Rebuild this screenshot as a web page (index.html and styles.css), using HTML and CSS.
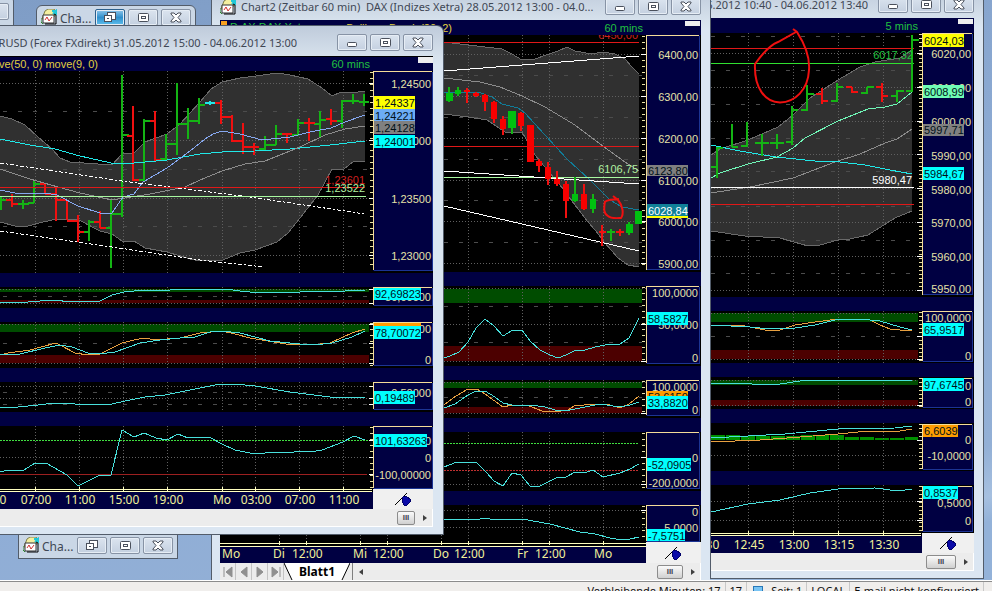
FILE: index.html
```html
<!DOCTYPE html>
<html lang="de">
<head>
<meta charset="utf-8">
<title>Charts</title>
<link rel="stylesheet" href="styles.css">
</head>
<body>
<svg class="defs" aria-hidden="true">
  <symbol id="i-chart" viewBox="0 0 16 16">
    <path d="M1 10 4 2l3-2h6l2 3-2 5z" fill="#f4efa0" stroke="#7d7d4a"/>
    <path d="M11 2h4M12 5l3-3v4" stroke="#20c8d8" stroke-width="2" fill="none"/>
    <path d="M2 6h11v8H2z" fill="#fff" stroke="#333"/>
    <path d="M13 5l2 1v9H4" fill="none" stroke="#000"/>
    <path d="M4 11l2-3 2 4 3-4" stroke="#d03030" fill="none"/>
    <path d="M0 9v4l2 2" stroke="#2a8a2a" fill="none"/>
  </symbol>
  <symbol id="i-min" viewBox="0 0 30 17"><rect x="10.500" y="8.500" width="9" height="4" rx="1" fill="#fff" stroke="#4a505c"/></symbol>
  <symbol id="i-max" viewBox="0 0 30 17"><rect x="10.500" y="4.500" width="10" height="8" rx="1" fill="#fff" stroke="#4a505c"/><rect x="13.500" y="7.500" width="4" height="2" fill="#fff" stroke="#4a505c"/></symbol>
  <symbol id="i-rest" viewBox="0 0 30 17"><rect x="12.500" y="3.500" width="8" height="7" fill="#fff" stroke="#4a505c"/><rect x="9.500" y="6.500" width="7" height="6" fill="#fff" stroke="#4a505c"/><rect x="12" y="9" width="2" height="1" fill="#4a505c"/></symbol>
  <symbol id="i-close" viewBox="0 0 30 17"><path d="M10 4h3l2 2 2-2h3v1l-3 3.500 3 3.500v1h-3l-2-2-2 2h-3v-1l3-3.500-3-3.500z" fill="#fff" stroke="#4a505c"/></symbol>
  <symbol id="i-pin" viewBox="0 0 18 14"><path d="M1 13 13 1" stroke="#000" fill="none"/><path d="M9 5l3-1 4 3v3l-3 3h-3L8 9z" fill="#0a0aa8" stroke="#00006a"/></symbol>
</svg>

<main class="desktop">
  <section class="mini mini-edge"><button class="cap" aria-label="Schließen"></button></section>
  <section class="mini mini-top">
    <svg class="ico"><use href="#i-chart"/></svg><span class="name">Cha...</span>
    <button class="cap hot" aria-label="Wiederherstellen"><svg><use href="#i-rest"/></svg></button>
    <button class="cap" aria-label="Maximieren"><svg><use href="#i-max"/></svg></button>
    <button class="cap" aria-label="Schließen"><svg><use href="#i-close"/></svg></button>
  </section>
  <section class="mini mini-bottom">
    <svg class="ico"><use href="#i-chart"/></svg><span class="name">Cha...</span>
    <button class="cap" aria-label="Wiederherstellen"><svg><use href="#i-rest"/></svg></button>
    <button class="cap" aria-label="Maximieren"><svg><use href="#i-max"/></svg></button>
    <button class="cap" aria-label="Schließen"><svg><use href="#i-close"/></svg></button>
  </section>

  <!-- DAX, 60 min -->
  <section class="win win-dax">
    <header class="bar">
      <svg class="ico"><use href="#i-chart"/></svg>
      <h2 class="name">Chart2 (Zeitbar 60 min)&nbsp; DAX (Indizes Xetra) 28.05.2012 13:00 - 04.0...</h2>
      <button class="cap" aria-label="Minimieren"><svg><use href="#i-min"/></svg></button>
      <button class="cap" aria-label="Maximieren"><svg><use href="#i-max"/></svg></button>
      <button class="cap" aria-label="Schließen"><svg><use href="#i-close"/></svg></button>
    </header>
    <svg class="chart" viewBox="220 20 481 543">
      <path class="plot" d="M220 35H701V272H220zM220 286H701V366H220zM220 380H701V418H220zM220 432H701V491H220zM220 505H701V545H220z"/>
      <path class="band" d="M444 42 460 44 502 49 512 54 522 60 535 59 549 54 558 51 567 47 575 51 592 54 603 52 615 54 625 59 632 67 639 74V267L628 265 618 258 605 243 595 230 588 222 575 205 560 185 549 172 535 155 522 132H505L487 120 468 117 444 114z"/>
      <path class="green" d="M220 289H642V303H220zM220 382H642V388H220z"/>
      <path class="red" d="M220 346H642V361H220zM220 407H642V413H220z"/>
      <path class="dot" d="M468.500 35V272M522.500 35V272M549.500 35V272M603.500 35V272M468.500 286V366M522.500 286V366M549.500 286V366M603.500 286V366M468.500 380V418M522.500 380V418M549.500 380V418M603.500 380V418M468.500 432V491M522.500 432V491M549.500 432V491M603.500 432V491M279.500 505V543M306.500 505V543M360.500 505V543M387.500 505V543M441.500 505V543M468.500 505V543M522.500 505V543M549.500 505V543M603.500 505V543"/>
      <path class="dot" d="M444 54.500H646M444 96.500H646M444 138.500H646M444 180.500H646M444 221.500H646M444 263.500H646M444 288.500H646M444 324.500H646M444 361.500H646M444 382.500H646M444 413.500H646M444 457.500H646M444 484.500H646M444 510.500H646M444 527.500H646"/>
      <path class="dash" d="M444 75.500H642M444 117.500H642M444 159.500H642M444 200.500H642M444 242.500H642M444 306.500H642M444 342.500H642M444 397.500H642"/>
      <path class="tick" d="M643.500 36V269M643.500 287V364M643.500 381V416M643.500 433V489M643.500 506V542"/>
      <path class="major" d="M641 54.500H646M641 96.500H646M641 138.500H646M641 180.500H646M641 221.500H646M641 263.500H646M641 324.500H646M641 361.500H646M641 413.500H646M641 457.500H646M641 484.500H646M641 510.500H646"/>
      <path class="ln edge" d="M444 42 460 44 502 49 512 54 522 60 535 59 549 54 558 51 567 47 575 51 592 54 603 52 615 54 625 59 632 67 639 74M639 267 628 265 618 258 605 243 595 230 588 222 575 205 560 185 549 172 535 155 522 132H505L487 120 468 117 444 114"/>
      <path class="ln gray" d="M444 78 480 82 500 87 522 96 545 107 575 125 600 144 625 162 639 171"/>
      <path class="ln teal" d="M444 92H478L492 97 502 104 518 108 525 113 545 135 567 159 590 180 610 200 622 207 639 210"/>
      <path class="ln r" d="M444 42.500H639M444 146.500H639"/>
      <path class="ln lime" d="M444 177.500H639"/>
      <path class="ln w" d="M444 71 639 56M444 171 639 184M444 206 639 251"/>
      <path class="ohlc r" d="M467 88V103M476 92V97M485 94V111M494 101V123M503 116V135M521 112V131M539 159V172M548 162V185M557 171V186M566 181V218M584 184V210M602 225V246M599 232H606M620 229V236M616 232H624"/>
      <path class="ohlc g" d="M449 87V102M458 87V96M512 111V134M575 177V202M593 194V213M611 229V241M607 232H615M629 222V235"/>
      <path class="fr" d="M464 90h6v2h-6zM473 93h6v3h-6zM482 95h6v7h-6zM491 102h6v17h-6zM500 119h6v10h-6zM518 113h6v13h-6zM527 125h7v37h-7zM536 161h6v5h-6zM545 167h6v12h-6zM554 179h6v5h-6zM563 184h6v17h-6zM581 194h6v15h-6z"/>
      <path class="fg" d="M446 93h7v8h-7zM455 90h6v4h-6zM508 111h8v17h-8zM572 194h6v7h-6zM590 199h6v10h-6zM626 224h7v9h-7zM635 211h7v13h-7z"/>
      <path class="pen" d="M605 201C604 208 603 213 608 216 611 219 618 218 621 218 624 214 623 206 618 200L613 196M605 202C608 199 613 200 619 199"/>
      <text class="n r" x="638" y="39">6450,00</text>
      <text class="n lime" x="638" y="173">6106,75</text>
      <path class="ln c" d="M444 358 450 356 459 352 468 342 476 328 485 319 494 326 503 336 513 330H522L530 341 540 350 550 355 558 358 566 355 576 350H585L595 347 605 345 620 344 629 338 639 318"/>
      <path class="ln o" d="M444 405 456 396 468 389H477L485 394 503 407 512 405H527L542 411 555 412 568 410 574 406 595 404 610 405 620 408 629 404 639 396"/>
      <path class="ln c" d="M444 408 455 404 468 395 476 391H485L495 397 503 403 512 405H530L545 407 555 410H570L590 406 600 404 620 407 630 405 639 402"/>
      <path class="gdot" d="M444 443.500H639"/><path class="rdot" d="M444 470.500H639"/>
      <path class="ln c" d="M444 467 457 462 468 463 476 462 486 472 494 481 503 486 512 473 521 475 530 486H540L558 477H566L575 472H587L593 470 603 477 620 473 630 469 639 464"/>
      <path class="ln c" d="M220 519H480L485 518 490 519H522L550 524 580 532 595 534 610 538 622 540 630 539 639 537"/>
      <rect class="navy" x="220" y="20" width="481" height="15"/>
      <rect x="221" y="21" width="6" height="9" fill="#f8a020"/>
      <text class="t g" x="230" y="31">D.AX.DAX Xetra</text>
      <text class="t y" x="452" y="32" text-anchor="end">BollingerBands(20, 2)</text>
      <text class="t g" x="643" y="32" text-anchor="end">60 mins</text>
      <rect x="685" y="21" width="15" height="5" fill="#eee"/>
      <path class="navy" d="M646 35H700V270H646zM646 286H700V364H646zM646 380H700V416H646zM646 432H700V489H646zM646 505H700V542H646z"/>
      <path class="ax" d="M699 35.500H646.500V270M699 286.500H646.500V363M699 380.500H646.500V415M699 432.500H646.500V488M699 505.500H646.500V541"/>
      <path class="axb" d="M699.500 36V269.500H647M699.500 287V363.500H647M699.500 381V415.500H647M699.500 433V488.500H647M699.500 506V541.500H647"/>
      <g class="n">
        <text x="698" y="59">6400,00</text><text x="698" y="101">6300,00</text><text x="698" y="143">6200,00</text><text x="698" y="185">6100,00</text><text x="698" y="226">6000,00</text><text x="698" y="268">5900,00</text>
        <text x="698" y="297">100,0000</text><text x="698" y="329">50,0000</text><text x="698" y="362">0</text>
        <text x="698" y="391">100,0000</text><text x="698" y="414">0</text><text x="698" y="462">0</text><text x="698" y="487">-200,0000</text>
        <text x="698" y="516">0</text><text x="698" y="532">-5,0000</text>
      </g>
      <path fill="#808080" d="M647 165h41v11h-41z"/><path fill="#108098" d="M647 204h41v12h-41z"/><path fill="#ff0" d="M647 216h41v2h-41z"/>
      <path fill="#ff9c00" d="M647 391h41v6h-41z"/>
      <text class="tag" x="648" y="401">53,6150</text>
      <path fill="#0ff" d="M647 312h41v13h-41zM647 396h41v13h-41zM647 458h44v13h-44zM647 529h38v12h-38z"/>
      <g class="tag"><text x="648" y="175">6123,80</text><text class="w" x="648" y="215">6028,84</text><text x="648" y="323">58,5827</text><text x="648" y="407">33,8820</text><text x="648" y="469">-52,0905</text><text x="648" y="540">-7,5751</text></g>
      <path fill="#000" d="M220 543H646V547H220z"/>
      <path class="base" d="M220 543.500H646M220 546.500H646M279.500 541V545M306.500 541V545M360.500 541V545M387.500 541V545M441.500 541V545M468.500 541V545M522.500 541V545M549.500 541V545M603.500 541V545"/>
      <rect class="face" x="646" y="542" width="56" height="21"/>
      <use href="#i-pin" x="664" y="546" width="18" height="14"/>
      <g class="time"><text x="222" y="558">Mo</text><text x="273" y="558">Di</text><text x="292" y="558">12:00</text><text x="353" y="558">Mi</text><text x="373" y="558">12:00</text><text x="433" y="558">Do</text><text x="454" y="558">12:00</text><text x="517" y="558">Fr</text><text x="535" y="558">12:00</text><text x="594" y="558">Mo</text></g>
    </svg>
    <footer class="sheets">
      <button aria-label="Erstes Blatt"><svg viewBox="0 0 16 16"><path d="M4 3v10M12 3v10L6 8z"/></svg></button>
      <button aria-label="Voriges Blatt"><svg viewBox="0 0 16 16"><path d="M11 3v10L5 8z"/></svg></button>
      <button aria-label="Nächstes Blatt"><svg viewBox="0 0 16 16"><path d="M5 3v10l6-5z"/></svg></button>
      <button aria-label="Letztes Blatt"><svg viewBox="0 0 16 16"><path d="M12 3v10M4 3v10l6-5z"/></svg></button>
      <div class="tab">
        <svg viewBox="0 0 66 17"><path d="M0 0 8 17H58L66 0z" fill="#fff" stroke="none"/><path d="M0 0 8 17M66 0 58 17" stroke="#000" fill="none"/></svg>
        <button>Blatt1</button>
      </div>
      <div class="scroll"><span class="arrow left"></span><button class="thumb" aria-label="Bildlauf">III</button><span class="arrow"></span></div>
    </footer>
  </section>

  <!-- 5 min -->
  <section class="win win-five">
    <header class="bar">
      <h2 class="name end">04.06.2012 10:40 - 04.06.2012 13:40</h2>
      <button class="cap" aria-label="Minimieren"><svg><use href="#i-min"/></svg></button>
      <button class="cap" aria-label="Maximieren"><svg><use href="#i-max"/></svg></button>
      <button class="cap" aria-label="Schließen"><svg><use href="#i-close"/></svg></button>
    </header>
    <svg class="chart" viewBox="711 18 263 535">
      <path class="plot" d="M711 33H974V297H711zM711 311H974V363H711zM711 377H974V409H711zM711 423H974V471H711zM711 485H974V536H711z"/>
      <path class="band" d="M711 155 720 149 748 140 778 127 793 115 810 98 838 80 860 67 875 62 900 58 912 50V211L895 218 868 235 850 239 838 240 820 245 808 246 780 238 745 236 711 231z"/>
      <path class="green" d="M711 313H918V322H711zM711 380H918V385H711z"/>
      <path class="red" d="M711 350H918V359H711zM711 400H918V406H711z"/>
      <path class="bars" d="M711 435h14v5h-14zM726 435h14v5h-14zM741 436h14v4h-14zM756 436h14v4h-14zM771 436h14v4h-14zM786 436h14v4h-14zM801 435h14v5h-14zM816 435h13v5h-13zM830 435h14v5h-14zM845 437h14v3h-14zM860 437h14v3h-14zM875 438h14v2h-14zM890 438h14v2h-14zM905 437h13v3h-13z"/>
      <path class="dot" d="M748.500 33V297M793.500 33V297M838.500 33V297M883.500 33V297M748.500 311V363M793.500 311V363M838.500 311V363M883.500 311V363M748.500 377V409M793.500 377V409M838.500 377V409M883.500 377V409M748.500 423V471M793.500 423V471M838.500 423V471M883.500 423V471M748.500 485V533M793.500 485V533M838.500 485V533M883.500 485V533"/>
      <path class="dot" d="M711 53.500H922M711 87.500H922M711 121.500H922M711 154.500H922M711 188.500H922M711 222.500H922M711 256.500H922M711 290.500H922M711 313.500H918M711 359.500H918M711 380.500H918M711 405.500H918M711 455.500H918M711 501.500H918M711 520.500H918"/>
      <path class="dash" d="M711 36.500H920M711 70.500H920M711 104.500H920M711 138.500H920M711 171.500H920M711 206.500H920M711 240.500H920M711 273.500H920M711 336.500H918"/>
      <path class="tick fine" d="M920.500 34V294M920.500 312V361M920.500 378V407M920.500 424V469M920.500 486V531"/>
      <path class="major" d="M917 53.500H922M917 87.500H922M917 121.500H922M917 154.500H922M917 188.500H922M917 222.500H922M917 256.500H922M917 290.500H922M917 336.500H922M917 359.500H922M917 405.500H922M917 440.500H922M917 501.500H922M917 520.500H922"/>
      <path class="ln edge" d="M711 155 720 149 748 140 778 127 793 115 810 98 838 80 860 67 875 62 900 58 912 50M912 211 895 218 868 235 850 239 838 240 820 245 808 246 780 238 745 236 711 231"/>
      <path class="ln gray" d="M711 193 750 187 793 178 835 162 860 154 885 143 897 139 912 129"/>
      <path class="ln r" d="M711 48.500H914M711 204.500H914"/>
      <path class="ln g" d="M711 63.500H914"/><path class="ln w" d="M711 187.500H914"/>
      <path class="ln cy" d="M711 145 740 151 776 157 815 161 840 162 865 165 890 170 912 174"/>
      <path class="ln mint" d="M711 178 720 173 748 164 777 157 793 148 805 138 838 121 868 109 885 107 897 104 912 92"/>
      <path class="ohlc g" d="M717 147V178M711 167H717M717 148H723M732 124V147M732 147H738M747 122V147M741 146H747M762 134V156M755 143H769M777 134V149M770 143H784M792 106V145M786 142H792M792 110H798M807 85V111M801 110H807M807 94H814M837 83V102M831 101H837M837 87H843M867 87V94M861 93H867M867 87H874M897 90V102M891 96H897M897 91H904M912 35V92M906 91H912M912 40H919"/>
      <path class="ohlc r" d="M822 88V104M816 94H822M822 101H828M852 87V93M846 87H852M852 92H858M882 83V102M876 87H882M882 96H888"/>
      <path class="pen" d="M793 29 797 32C806 46 810 58 809 70 808 90 795 102 780 102.500 765 102 754 88 755 64 760 57 770 45 778 42L796 32"/>
      <text class="n g" x="913" y="59">6017,32</text><text class="n w" x="912" y="184">5980,47</text>
      <path class="ln o" d="M711 325 745 326 765 330H780L795 325 815 322 838 319H868L880 325 890 329 900 330H912"/>
      <path class="ln c" d="M711 325 750 327 770 329 795 328 815 325 835 320 860 319 880 321 900 327 912 330"/>
      <path class="ln c" d="M711 383H740L752 384H780L800 381 838 380.500 912 381"/>
      <path class="ln o" d="M711 442 760 440 800 437 838 434 868 431H900L912 429"/>
      <path class="ln c" d="M711 438 748 436 785 434 838 429 895 428 912 426"/>
      <path class="ln c" d="M711 512 748 504 780 500 810 493 838 489 875 488 890 490 898 491 912 489"/>
      <text class="t g" x="918" y="30" text-anchor="end">5 mins</text>
      <rect x="958" y="19" width="15" height="5" fill="#eee"/>
      <path class="navy" d="M922 33H973V295H922zM922 311H973V362H922zM922 378H973V408H922zM922 424H973V470H922zM922 486H973V532H922z"/>
      <path class="ax" d="M972 33.500H922.500V295M972 311.500H922.500V361M972 378.500H922.500V407M972 424.500H922.500V469M972 486.500H922.500V531"/>
      <path class="axb" d="M972.500 34V294.500H923M972.500 312V361.500H923M972.500 379V407.500H923M972.500 425V469.500H923M972.500 487V531.500H923"/>
      <g class="n">
        <text x="971" y="58">6020,00</text><text x="971" y="92">6010,00</text><text x="971" y="126">6000,00</text><text x="971" y="160">5990,00</text><text x="971" y="194">5980,00</text><text x="971" y="227">5970,00</text><text x="971" y="261">5960,00</text><text x="971" y="293">5950,00</text>
        <text x="971" y="322">100,0000</text><text x="971" y="360">0</text><text x="971" y="390">0</text><text x="971" y="406">0</text><text x="971" y="444">0</text><text x="971" y="460">-10,0000</text><text x="971" y="507">0,5000</text><text x="971" y="525">0</text>
      </g>
      <path fill="#ff0" d="M923 34h41v13h-41z"/><path fill="#6ffcb4" d="M923 85h41v13h-41z"/><path fill="#808080" d="M923 124h41v12h-41z"/>
      <path fill="#0ff" d="M923 167h41v13h-41zM923 323h41v13h-41zM923 378h41v13h-41zM923 486h35v13h-35z"/><path fill="#ff9c00" d="M923 425h35v12h-35z"/>
      <g class="tag"><text x="924" y="45">6024,03</text><text x="924" y="96">6008,99</text><text x="924" y="134">5997,71</text><text x="924" y="178">5984,67</text><text x="924" y="334">65,9517</text><text x="924" y="389">97,6745</text><text x="924" y="435">6,6039</text><text x="924" y="497">0,8537</text></g>
      <path class="base" d="M711 533.500H921M711 535.500H921M748.500 531V535M793.500 531V535M838.500 531V535M883.500 531V535"/>
      <rect class="face" x="922" y="533" width="53" height="20"/>
      <use href="#i-pin" x="939" y="536" width="18" height="14"/>
      <g class="time mid"><text x="704" y="549">12:30</text><text x="749" y="549">12:45</text><text x="794" y="549">13:00</text><text x="839" y="549">13:15</text><text x="884" y="549">13:30</text></g>
    </svg>
    <div class="scroll"><button class="thumb" aria-label="Bildlauf">III</button><span class="arrow"></span></div>
  </section>

  <!-- EURUSD, 60 min -->
  <section class="win win-eur">
    <header class="bar">
      <h2 class="name end">EURUSD (Forex FXdirekt) 31.05.2012 15:00 - 04.06.2012 13:00</h2>
      <button class="cap" aria-label="Minimieren"><svg><use href="#i-min"/></svg></button>
      <button class="cap" aria-label="Maximieren"><svg><use href="#i-max"/></svg></button>
      <button class="cap" aria-label="Schließen"><svg><use href="#i-close"/></svg></button>
    </header>
    <svg class="chart" viewBox="0 56 433 453">
      <path class="plot" d="M0 71H433V273H0zM0 287H433V308H0zM0 322H433V368H0zM0 382H433V412H0zM0 426H433V492H0z"/>
      <path class="band" d="M0 116 12 119 25 125 38 137 52 149 60 158 70 162 112 165 122 154 134 153 145 142 167 134 180 124 200 102 211 89 222 82 240 78 256 76 277 73 290 75 308 79 322 88 332 96 341 92 352 93 365 91V162L354 161 344 169H332L318 195 300 218 288 233 277 242 255 250 240 253 223 260 200 261 190 259 167 252 145 248 134 241H122L112 234 100 231 77 219H56L35 224 25 227 15 226 0 222z"/>
      <path class="green" d="M0 289H369V292H0zM0 324H369V332H0z"/>
      <path class="red" d="M0 300H369V303H0zM0 355H369V363H0z"/>
      <path class="dot" d="M35.500 71V273M79.500 71V273M123.500 71V273M167.500 71V273M222.500 71V273M255.500 71V273M299.500 71V273M343.500 71V273M35.500 287V308M79.500 287V308M123.500 287V308M167.500 287V308M222.500 287V308M255.500 287V308M299.500 287V308M343.500 287V308M35.500 322V368M79.500 322V368M123.500 322V368M167.500 322V368M222.500 322V368M255.500 322V368M299.500 322V368M343.500 322V368M35.500 382V412M79.500 382V412M123.500 382V412M167.500 382V412M222.500 382V412M255.500 382V412M299.500 382V412M343.500 382V412M35.500 426V489M79.500 426V489M123.500 426V489M167.500 426V489M222.500 426V489M255.500 426V489M299.500 426V489M343.500 426V489"/>
      <path class="dot" d="M0 83.500H373M0 140.500H373M0 198.500H373M0 255.500H373M0 289.500H369M0 303.500H369M0 324.500H369M0 363.500H369M0 386.500H373M0 398.500H373M0 457.500H373"/>
      <path class="dash" d="M3 111.500H369M3 169.500H369M3 226.500H369M3 296.500H369M3 343.500H369M3 392.500H369M3 404.500H369"/>
      <path class="tick" d="M371.500 72V270M371.500 323V366M371.500 427V489"/>
      <path class="major" d="M369 83.500H373M369 140.500H373M369 198.500H373M369 255.500H373M369 289.500H373M369 303.500H373M369 324.500H373M369 343.500H373M369 363.500H373M369 386.500H373M369 398.500H373M369 404.500H373M369 440.500H373M369 457.500H373M369 474.500H373"/>
      <path class="ln edge" d="M0 116 12 119 25 125 38 137 52 149 60 158 70 162 112 165 122 154 134 153 145 142 167 134 180 124 200 102 211 89 222 82 240 78 256 76 277 73 290 75 308 79 322 88 332 96 341 92 352 93 365 91M365 162 354 161 344 169H332L318 195 300 218 288 233 277 242 255 250 240 253 223 260 200 261 190 259 167 252 145 248 134 241H122L112 234 100 231 77 219H56L35 224 25 227 15 226 0 222"/>
      <path class="ohlc g" d="M1 197V210M1 200H7M23 200V209M18 204H29M34 181V203M28 203H34M34 184H40M89 220V241M83 232H89M89 222H95M111 200V268M105 228H111M111 214H117M122 75V217M116 214H122M122 135H129M144 119V181M138 180H144M144 121H150M166 134V160M160 159H166M166 144H172M177 83V155M171 144H177M177 124H183M188 108V139M182 124H188M188 121H194M199 98V124M193 121H199M199 105H205M265 136V150M259 149H265M265 145H271M276 125V145M270 145H276M276 134H282M298 119V136M292 135H298M298 123H304M320 111V137M314 124H320M320 120H326M342 100V128M336 121H342M342 101H348M353 94V104M348 101H359M364 94V106M359 102H369"/>
      <path class="ohlc r" d="M12 194V207M6 200H12M12 204H18M45 184V194M40 184H45M45 194H51M56 187V221M50 194H56M56 200H62M67 200V220M61 200H67M67 221H73M78 215V242M72 221H78M78 232H84M100 211V228M94 222H100M100 228H106M133 106V181M127 136H133M133 180H139M155 111V161M150 121H155M155 160H161M221 100V124M215 103H221M221 117H227M232 115V142M226 117H232M232 141H238M243 123V154M237 141H243M243 147H249M254 143V155M248 147H259M287 133V143M282 134H292M309 118V141M304 123H315M331 109V125M326 119H331M331 121H337"/>
      <path class="ohlc cy" d="M205 103H215M210 101V105"/>
      <path class="ln cy" d="M0 139 30 145 55 149 80 156 111 163H134L167 160 200 154 222 152 255 151 290 149 330 145 365 141"/>
      <path class="ln gray" d="M0 169 30 179 58 187 80 193 112 200 150 194 185 187 200 180 222 171 245 164 265 161 280 155 300 147 325 135 345 129 365 126"/>
      <path class="ln blue" d="M0 190 20 194 45 193 57 195 78 206 100 213H112L123 197 134 194 143 182 167 168 190 151 205 139 213 134 222 131 240 134 262 140 290 137 310 132 331 128 345 122 365 115"/>
      <path class="trend" d="M0 163 122 181 250 197 365 214M0 231 112 247 200 260 264 267"/>
      <path class="ln r" d="M0 187.500H365"/><path class="ln lime" d="M0 196.500H366"/>
      <text class="n r" x="365" y="184">1,23601</text><text class="n lime" x="365" y="192">1,23522</text>
      <path class="ln c" d="M0 302H28L40 301 60 300 65 302 85 301H100L112 295 124 292 145 290H170L175 289H225L240 291 250 292H300L320 291H345L365 290"/>
      <path class="ln o" d="M0 355 8 353 30 350 56 343 60 345 75 353 88 355 100 354 122 343 134 340 145 338 155 340 180 338 200 333 222 331 235 334 250 338 286 344 310 345 330 343 352 333 365 329"/>
      <path class="ln c" d="M0 355 20 354 45 348 60 345 72 347 88 353 100 354 115 352 140 343 160 340 180 338 195 337 210 332 222 331 240 333 270 341 300 344 315 345 332 343 352 337 365 331"/>
      <path class="ln c" d="M0 407H18L38 405 55 403 75 404H112L125 401 145 397 165 395 180 392 200 388 220 384H235L255 386 290 392 330 397H365"/>
      <path class="gdot" d="M0 440.500H369"/><path class="ln dr" d="M0 474.500H367"/>
      <path class="ln c" d="M0 472 8 470H24L35 463H46L67 475 78 486 90 480 100 475H111L122 430 134 437 144 433 156 438 167 440 178 434 188 438 200 437 211 438 222 444 235 450 255 454 275 452 288 453 300 451 310 452 322 450 343 442 354 436 365 440"/>
      <path class="plot" d="M0 56H433V57H0z"/>
      <text class="t y" x="98" y="68" text-anchor="end">move(50, 0) move(9, 0)</text>
      <text class="t g" x="370" y="68" text-anchor="end">60 mins</text>
      <rect x="418" y="57" width="15" height="6" fill="#eee"/>
      <path class="navy" d="M373 71H432V271H373zM373 287H432V306H373zM373 322H432V366H373zM373 382H432V410H373zM373 426H432V489H373z"/>
      <path class="ax" d="M432 71.500H373.500V270M432 287.500H373.500V305M432 322.500H373.500V365M432 382.500H373.500V409M432 426.500H373.500V488"/>
      <path class="axb" d="M432.500 72V270.500H374M432.500 288V305.500H374M432.500 323V365.500H374M432.500 383V409.500H374M432.500 427V488.500H374"/>
      <g class="n">
        <text x="431" y="88">1,24500</text><text x="431" y="145">1,24000</text><text x="431" y="203">1,23500</text><text x="431" y="260">1,23000</text>
        <text x="431" y="301">50,00000</text><text x="431" y="333">100,00000</text><text x="431" y="364">0</text><text x="431" y="397">0,50000</text><text x="431" y="445">100,00000</text><text x="431" y="462">0</text><text x="431" y="479">-100,00000</text>
      </g>
      <path fill="#ff0" d="M374 96h41v13h-41z"/><path fill="#6cacf4" d="M374 109h41v13h-41z"/><path fill="#808080" d="M374 121h41v13h-41z"/><path fill="#ff9c00" d="M374 323h47v5h-47z"/>
      <path fill="#0ff" d="M374 135h41v13h-41zM374 288h47v12h-47zM374 326h47v13h-47zM374 391h41v13h-41zM374 434h53v13h-53z"/>
      <g class="tag"><text x="375" y="107">1,24337</text><text x="375" y="120">1,24221</text><text x="375" y="132">1,24128</text><text x="375" y="146">1,24001</text><text x="375" y="298">92,69823</text><text x="375" y="337">78,70072</text><text x="375" y="402">0,19489</text><text x="375" y="445">101,63263</text></g>
      <path class="base" d="M0 489.500H372M0 491.500H372M35.500 487V491M79.500 487V491M123.500 487V491M167.500 487V491M222.500 487V491M255.500 487V491M299.500 487V491M343.500 487V491"/>
      <rect class="face" x="373" y="489" width="61" height="20"/>
      <use href="#i-pin" x="394" y="492" width="18" height="14"/>
      <g class="time mid"><text x="-9" y="504">03:00</text><text x="36" y="504">07:00</text><text x="80" y="504">11:00</text><text x="124" y="504">15:00</text><text x="168" y="504">19:00</text><text x="222" y="504">Mo</text><text x="256" y="504">03:00</text><text x="300" y="504">07:00</text><text x="344" y="504">11:00</text></g>
    </svg>
    <div class="scroll"><button class="thumb small" aria-label="Bildlauf">III</button><span class="arrow"></span></div>
  </section>
</main>

<footer class="status">
  <span>Verbleibende Minuten: 17</span><span>17</span><span class="lamp"></span><span>Seit: 1</span><span>LOCAL</span><span class="mail">E-mail nicht konfiguriert</span>
</footer>
</body>
</html>
```
FILE: styles.css
```css
* { box-sizing: border-box; }
body {
  margin: 0;
  height: 100vh;
  display: flex;
  flex-direction: column;
  overflow: hidden;
  background: #f0eeec;
  font: 11px/14px "Noto Sans", "Open Sans", sans-serif;
  color: #3f4754;
}
button { font: inherit; color: inherit; padding: 0; border: 0; background: none; }
.defs { position: absolute; width: 0; height: 0; }

.desktop {
  flex: 1;
  position: relative;
  overflow: hidden;
  background: linear-gradient(165deg, #7f9dc6 0%, #8fadd6 60%, #93b0d6 84%, #a6c0e0 90%, #93b2d9 93%);
}

/* windows */
.win, .mini { position: absolute; border: 1px solid #525c6a; }
.win {
  display: flex;
  flex-direction: column;
  background: #dbe6f2;
  padding-bottom: 7px;
}
.win-eur {
  left: 0; top: 25px; width: 444px;
  border-left: 0;
  padding-right: 10px;
  border-radius: 0 7px 0 0;
}
.win-dax { left: 211px; top: -11px; width: 499px; padding: 0 9px 0 8px; border-right: 0; }
.win-five { left: 710px; top: -13px; width: 274px; padding-right: 9px; }

.bar {
  height: 30px;
  display: flex;
  align-items: center;
  gap: 3px;
  padding-top: 3px;
}
.win-eur, .win-dax, .win-five { background: linear-gradient(#bfcbdb, #d6e1ec 30px, #dbe6f2 40px); }
.name { margin: 0; font-weight: 400; font-size: 11px; line-height: 16px; white-space: nowrap; }
.bar .name { flex: 1; min-width: 0; overflow: hidden; }
.bar .ico { margin-right: 2px; }
.bar .end { display: flex; justify-content: flex-end; margin-right: 7px; }
.win-eur .end { margin-right: 37px; }
.ico { width: 16px; height: 16px; flex: none; }
.cap {
  width: 30px;
  height: 17px;
  flex: none;
  border: 1px solid #8793a5;
  border-radius: 2px;
  background: linear-gradient(#dbe4ef, #c4d0e0);
  box-shadow: inset 0 0 0 1px #e6edf5;
}
.cap svg { display: block; width: 30px; height: 17px; margin: -1px; }
.cap.hot { background: linear-gradient(#8fc6ea, #2f8fcc 50%, #5fc0ee); border-color: #2b5f8c; }

.mini {
  display: flex;
  align-items: flex-start;
  gap: 3px;
  height: 26px;
  padding: 3px 4px;
  background: #cad7e6;
}
.mini .name { font-size: 12px; line-height: 19px; flex: 1; }
.mini-top { left: 36px; top: 5px; width: 160px; border-radius: 6px 6px 0 0; }
.mini-bottom { left: 18px; top: 533px; width: 160px; }
.mini-edge { left: -26px; top: -5px; width: 40px; height: 40px; border-radius: 0 6px 0 0; padding-top: 7px; }

/* charts */
.chart {
  display: block;
  width: 100%;
  height: auto;
  background: #000042;
  shape-rendering: crispEdges;
}
.chart text { font: 11px "Liberation Sans", sans-serif; }
.chart .time text { font: 12px "Noto Sans", sans-serif; fill: #f0f09a; }
.mid { text-anchor: middle; }
.n { text-anchor: end; fill: #e6e2a8; }
.tag { fill: #001018; }
.plot { fill: #000; }
.navy { fill: #000042; }
.face { fill: #f0f0f0; }
.band { fill: #303030; }
.green { fill: #004c00; }
.red { fill: #4c0000; }
.bars { fill: #009000; }
.dot, .dash, .tick, .major, .gdot, .rdot, .ln, .ohlc, .ax, .axb, .base, .pen, .trend { fill: none; }
.dot { stroke: #606060; stroke-dasharray: 1 2; }
.dash { stroke: #4c4c4c; stroke-dasharray: 4 11; }
.tick { stroke: #e8e0a8; stroke-width: 3; stroke-dasharray: 1 5; }
.tick.fine { stroke-dasharray: 1 3; }
.major { stroke: #fff; }
.gdot { stroke: #40e040; stroke-dasharray: 2 1; }
.rdot { stroke: #c03030; stroke-dasharray: 2 1; }
.ax { stroke: #f4dc98; }
.axb { stroke: #1c3494; }
.base { stroke: #ffffc0; }
.edge { stroke: #6a6a6a; }
.gray { stroke: #8c8c8c; }
.blue { stroke: #86a8f0; }
.teal { stroke: #107c98; }
.c { stroke: #48e0dc; }
.ln.cy, .ohlc.cy { stroke: #20e8e8; }
.o { stroke: #e8a040; }
.mint { stroke: #70f8b8; }
.ln.r { stroke: #e01818; }
.ln.dr { stroke: #9c2020; }
.ln.g { stroke: #30e030; }
.ln.lime { stroke: #a8f8a0; }
.ln.w { stroke: #fff; }
.ohlc { stroke-width: 2; }
.ohlc.g { stroke: #14b414; }
.ohlc.r { stroke: #f01010; }
.fr { fill: #f80000; }
.fg { fill: #00c010; }
.pen { stroke: #f01010; stroke-width: 2; shape-rendering: auto; }
.trend { stroke: #fff; stroke-dasharray: 4 2 2 2; }
text.r { fill: #d02020; }
text.g { fill: #20c040; }
text.y { fill: #e0d040; }
text.w { fill: #fff; }
text.lime { fill: #b0f0a0; }

/* scroll bars and sheet tabs */
.scroll {
  flex: 1;
  height: 18px;
  display: flex;
  align-items: center;
  justify-content: flex-end;
  gap: 8px;
  padding-right: 5px;
  background: #ececec;
  border-right: 1px solid #fff;
}
.win > .scroll { flex: none; border-bottom: 1px solid #fff; }
.thumb {
  width: 30px;
  height: 14px;
  border: 1px solid #8c8c8c;
  border-radius: 2px;
  background: linear-gradient(#fafafa, #d0d0d0);
  font: 700 8px/11px "Liberation Sans", sans-serif;
}
.thumb.small { width: 18px; }
.sheets .thumb { width: 26px; }
.arrow { border: 3px solid transparent; border-left: 4px solid #404040; border-right: 0; }
.arrow.left { border-left: 0; border-right: 4px solid #404040; margin-right: auto; }
.sheets { display: flex; height: 17px; background: #ececec; }
.sheets > button { width: 16px; border-right: 1px solid #c4c4c4; }
.sheets > button svg { display: block; width: 16px; height: 16px; fill: #909090; stroke: #909090; }
.tab { position: relative; width: 66px; height: 17px; }
.tab svg { display: block; width: 66px; height: 17px; }
.tab button { position: absolute; inset: 0; color: #000; font-weight: 700; font-size: 12px; line-height: 16px; }
.sheets .scroll { margin-left: 2px; padding-left: 6px; height: 17px; border-left: 1px solid #808080; }

/* status bar */
.status {
  flex: none;
  height: 11px;
  display: flex;
  justify-content: flex-end;
  overflow: hidden;
  padding: 1px 8px 0 0;
  border-top: 1px solid #fff;
  box-shadow: inset 0 1px 0 #8c8c8c;
  font-size: 11px;
  line-height: 16px;
  color: #101010;
  white-space: nowrap;
}
.status span { padding: 1px 4px 0; border-right: 1px solid #c8c8c8; }
.status .lamp { width: 10px; height: 12px; margin: 4px 4px 0 6px; border: 1px solid #2878b8; background: #78c4f4; }
```
